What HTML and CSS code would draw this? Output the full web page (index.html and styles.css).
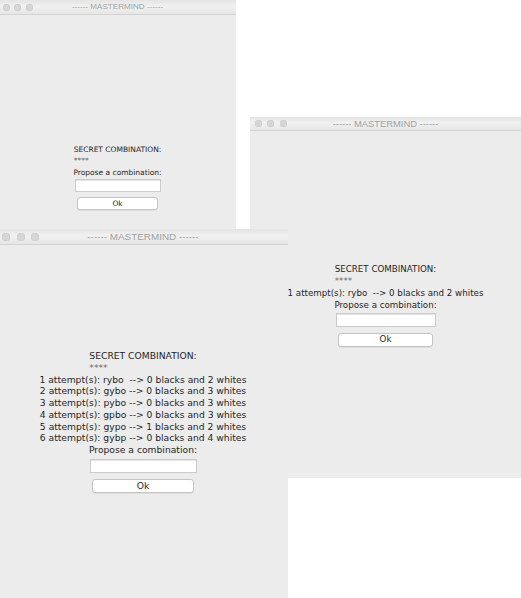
FILE: index.html
```html
<!DOCTYPE html>
<html lang="en">
<head>
<meta charset="utf-8">
<title>Mastermind</title>
<link rel="stylesheet" href="styles.css">
</head>
<body>
<div class="desktop">
  <section class="win win-a">
    <header class="titlebar">
      <div class="lights"><span class="light"></span><span class="light"></span><span class="light"></span></div>
      <div class="title">------ MASTERMIND ------</div>
      <div></div>
    </header>
    <div class="content">
      <div class="secret"><div>SECRET COMBINATION:</div><div class="stars">****</div></div>
      <div class="line">Propose a combination:</div>
      <input class="field" type="text">
      <button class="btn" type="button">Ok</button>
    </div>
  </section>

  <section class="win win-b">
    <header class="titlebar">
      <div class="lights"><span class="light"></span><span class="light"></span><span class="light"></span></div>
      <div class="title">------ MASTERMIND ------</div>
      <div></div>
    </header>
    <div class="content">
      <div class="secret"><div>SECRET COMBINATION:</div><div class="stars">****</div></div>
      <div class="line">1 attempt(s): rybo  --&gt; 0 blacks and 2 whites</div>
      <div class="line">Propose a combination:</div>
      <input class="field" type="text">
      <button class="btn" type="button">Ok</button>
    </div>
  </section>

  <section class="win win-c">
    <header class="titlebar">
      <div class="lights"><span class="light"></span><span class="light"></span><span class="light"></span></div>
      <div class="title">------ MASTERMIND ------</div>
      <div></div>
    </header>
    <div class="content">
      <div class="secret"><div>SECRET COMBINATION:</div><div class="stars">****</div></div>
      <div class="line">1 attempt(s): rybo  --&gt; 0 blacks and 2 whites</div>
      <div class="line">2 attempt(s): gybo --&gt; 0 blacks and 3 whites</div>
      <div class="line">3 attempt(s): pybo --&gt; 0 blacks and 3 whites</div>
      <div class="line">4 attempt(s): gpbo --&gt; 0 blacks and 3 whites</div>
      <div class="line">5 attempt(s): gypo --&gt; 1 blacks and 2 whites</div>
      <div class="line">6 attempt(s): gybp --&gt; 0 blacks and 4 whites</div>
      <div class="line">Propose a combination:</div>
      <input class="field" type="text">
      <button class="btn" type="button">Ok</button>
    </div>
  </section>
</div>
</body>
</html>
```

FILE: styles.css
```css
html, body {
  margin: 0;
  padding: 0;
}

body {
  background: #ffffff;
}

.desktop {
  position: relative;
  width: 521px;
  height: 598px;
  overflow: hidden;
  background: #ffffff;
}

/* ---------- windows on the desktop ---------- */
.win {
  position: absolute;
  display: flex;
  flex-direction: column;
  background: #ececec;
  overflow: hidden;
}

.win-a {
  left: -1px;
  top: 0;
  width: 237px;
  height: 339px;
  --tb: 15px;
  --dot: 7px;
  --dot-gap: 4.5px;
  --dot-pad: 3.5px;
  --title-fs: 8.1px;
  --fs: 7.5px;
  --lh: 11.7px;
  --field-w: 86px;
  --field-h: 13px;
  --btn-w: 81px;
  --btn-h: 13px;
  --gap1: 0.5px;
  --gap2: 5px;
}

.win-b {
  left: 250px;
  top: 117px;
  width: 271px;
  height: 361px;
  --tb: 14px;
  --dot: 7px;
  --dot-gap: 5.5px;
  --dot-pad: 4.5px;
  --title-fs: 9.4px;
  --fs: 8.7px;
  --lh: 12px;
  --field-w: 100px;
  --field-h: 14px;
  --btn-w: 95px;
  --btn-h: 14px;
  --gap1: 2px;
  --gap2: 6px;
}

.win-c {
  left: -2px;
  top: 229px;
  width: 290px;
  height: 369px;
  --tb: 16px;
  --dot: 8px;
  --dot-gap: 6.5px;
  --dot-pad: 4px;
  --title-fs: 9.9px;
  --fs: 9.2px;
  --lh: 11.75px;
  --field-w: 107px;
  --field-h: 14px;
  --btn-w: 102px;
  --btn-h: 14px;
  --gap1: 3px;
  --gap2: 6px;
}

/* ---------- title bar ---------- */
.titlebar {
  flex: none;
  height: var(--tb);
  box-sizing: border-box;
  display: grid;
  grid-template-columns: 1fr auto 1fr;
  align-items: center;
  background: linear-gradient(#e4e4e4, #f1f1f1 45%, #e6e6e6);
  border-bottom: 1px solid #d3d3d3;
}

.lights {
  display: flex;
  align-items: center;
  gap: var(--dot-gap);
  padding-left: var(--dot-pad);
}

.light {
  width: var(--dot);
  height: var(--dot);
  border-radius: 50%;
  background: #d6d6d6;
  box-shadow: inset 0 0 0 0.5px #c8c8c8;
}

.title {
  font-family: "Liberation Sans", Arial, sans-serif;
  font-size: var(--title-fs);
  line-height: 1;
  color: #a0a0a0;
  white-space: pre;
}

/* ---------- content ---------- */
.content {
  flex: 1;
  display: flex;
  flex-direction: column;
  align-items: center;
  justify-content: center;
  font-family: "DejaVu Sans", sans-serif;
  font-size: var(--fs);
  line-height: var(--lh);
  color: #1f1f1f;
}

.stars {
  color: #6a6a6a;
}

.line {
  white-space: pre;
}

.field {
  width: var(--field-w);
  height: var(--field-h);
  margin: var(--gap1) 0 0;
  padding: 0;
  box-sizing: border-box;
  border: 1px solid #cbcbcb;
  background: #ffffff;
  box-shadow: inset 0 1px 0 #e6e6e6;
}

.btn {
  width: var(--btn-w);
  height: var(--btn-h);
  margin: var(--gap2) 0 0;
  padding: 0;
  box-sizing: border-box;
  border: 1px solid #c4c4c4;
  border-radius: 3px;
  background: #ffffff;
  box-shadow: 0 1px 0 rgba(0, 0, 0, 0.06);
  font: inherit;
  line-height: 1;
  color: #1f1f1f;
}
```
